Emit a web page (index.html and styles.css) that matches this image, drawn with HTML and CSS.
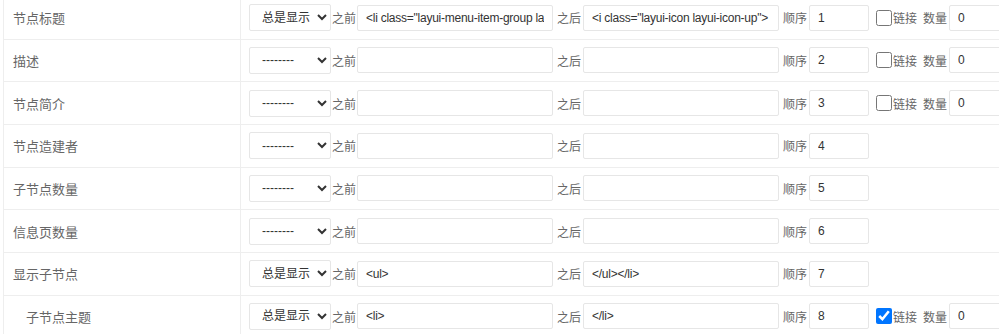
FILE: index.html
```html
<!DOCTYPE html>
<html lang="zh-CN">
<head>
  <meta charset="UTF-8">
  <meta name="viewport" content="width=device-width, initial-scale=1.0">
  <title>节点字段设置</title>
  <link rel="stylesheet" href="styles.css">
</head>
<body>
  <div class="field-table">
    <div class="row">
      <div class="label">节点标题</div>
      <div class="cell">
        <select class="show-select"><option>总是显示</option><option>--------</option></select>
        <span class="tag">之前</span>
        <input class="wide" type="text" value='<li class="layui-menu-item-group layui-menu-item-down">'>
        <span class="tag after">之后</span>
        <input class="wide" type="text" value='<i class="layui-icon layui-icon-up">'>
        <span class="tag after">顺序</span>
        <input class="order" type="text" value="1">
        <label class="link"><input type="checkbox">链接</label>
        <span class="tag qty">数量</span>
        <input class="count" type="text" value="0">
      </div>
    </div>
    <div class="row">
      <div class="label">描述</div>
      <div class="cell">
        <select class="show-select"><option>--------</option><option>总是显示</option></select>
        <span class="tag">之前</span>
        <input class="wide" type="text" value="">
        <span class="tag after">之后</span>
        <input class="wide" type="text" value="">
        <span class="tag after">顺序</span>
        <input class="order" type="text" value="2">
        <label class="link"><input type="checkbox">链接</label>
        <span class="tag qty">数量</span>
        <input class="count" type="text" value="0">
      </div>
    </div>
    <div class="row">
      <div class="label">节点简介</div>
      <div class="cell">
        <select class="show-select"><option>--------</option><option>总是显示</option></select>
        <span class="tag">之前</span>
        <input class="wide" type="text" value="">
        <span class="tag after">之后</span>
        <input class="wide" type="text" value="">
        <span class="tag after">顺序</span>
        <input class="order" type="text" value="3">
        <label class="link"><input type="checkbox">链接</label>
        <span class="tag qty">数量</span>
        <input class="count" type="text" value="0">
      </div>
    </div>
    <div class="row">
      <div class="label">节点造建者</div>
      <div class="cell">
        <select class="show-select"><option>--------</option><option>总是显示</option></select>
        <span class="tag">之前</span>
        <input class="wide" type="text" value="">
        <span class="tag after">之后</span>
        <input class="wide" type="text" value="">
        <span class="tag after">顺序</span>
        <input class="order" type="text" value="4">
      </div>
    </div>
    <div class="row">
      <div class="label">子节点数量</div>
      <div class="cell">
        <select class="show-select"><option>--------</option><option>总是显示</option></select>
        <span class="tag">之前</span>
        <input class="wide" type="text" value="">
        <span class="tag after">之后</span>
        <input class="wide" type="text" value="">
        <span class="tag after">顺序</span>
        <input class="order" type="text" value="5">
      </div>
    </div>
    <div class="row">
      <div class="label">信息页数量</div>
      <div class="cell">
        <select class="show-select"><option>--------</option><option>总是显示</option></select>
        <span class="tag">之前</span>
        <input class="wide" type="text" value="">
        <span class="tag after">之后</span>
        <input class="wide" type="text" value="">
        <span class="tag after">顺序</span>
        <input class="order" type="text" value="6">
      </div>
    </div>
    <div class="row">
      <div class="label">显示子节点</div>
      <div class="cell">
        <select class="show-select"><option>总是显示</option><option>--------</option></select>
        <span class="tag">之前</span>
        <input class="wide" type="text" value="<ul>">
        <span class="tag after">之后</span>
        <input class="wide" type="text" value="</ul></li>">
        <span class="tag after">顺序</span>
        <input class="order" type="text" value="7">
      </div>
    </div>
    <div class="row">
      <div class="label sub">子节点主题</div>
      <div class="cell">
        <select class="show-select"><option>总是显示</option><option>--------</option></select>
        <span class="tag">之前</span>
        <input class="wide" type="text" value="<li>">
        <span class="tag after">之后</span>
        <input class="wide" type="text" value="</li>">
        <span class="tag after">顺序</span>
        <input class="order" type="text" value="8">
        <label class="link"><input type="checkbox" checked>链接</label>
        <span class="tag qty">数量</span>
        <input class="count" type="text" value="0">
      </div>
    </div>
  </div>
</body>
</html>
```

FILE: styles.css
```css
body {
  margin: 0;
  padding: 0;
  background: #fff;
  font-family: "Liberation Sans", "Noto Sans CJK SC", sans-serif;
  color: #666;
  overflow: hidden;
}
.field-table {
  margin: -3px 0 0 3px;
  border-left: 1px solid #eee;
}
.row {
  display: flex;
  height: 42.67px;
  box-sizing: border-box;
  border-bottom: 1px solid #eee;
  overflow: hidden;
}
.label {
  width: 237px;
  flex: none;
  box-sizing: border-box;
  padding-left: 9px;
  border-right: 1px solid #eee;
  display: flex;
  align-items: center;
  font-size: 13px;
}
.label.sub {
  padding-left: 22px;
}
.cell {
  display: flex;
  flex: none;
  align-items: center;
  padding-left: 8px;
  font-size: 12px;
}
.show-select {
  width: 82px;
  height: 27px;
  box-sizing: border-box;
  padding: 0 0 0 8px;
  border: 1px solid #e6e6e6;
  border-radius: 2px;
  background: #fff;
  color: #333;
  font-family: "Liberation Sans", "Noto Sans CJK SC", sans-serif;
  font-size: 12px;
}
.tag {
  margin: 0 1px;
  white-space: nowrap;
}
.tag.after {
  margin: 0 2px 0 4px;
}
.tag.qty {
  margin: 0 2px 0 6px;
}
input[type="text"] {
  height: 26px;
  box-sizing: border-box;
  padding: 0 8px;
  border: 1px solid #e6e6e6;
  border-radius: 2px;
  color: #333;
  font-family: "Liberation Sans", "Noto Sans CJK SC", sans-serif;
  font-size: 12px;
  letter-spacing: -0.25px;
  outline: none;
}
.wide {
  width: 196px;
}
.order {
  width: 60px;
}
.count {
  width: 80px;
}
.link {
  display: flex;
  align-items: center;
  margin-left: 7px;
  white-space: nowrap;
}
.link input {
  width: 16px;
  height: 16px;
  margin: 0 1px 0 0;
}
```
